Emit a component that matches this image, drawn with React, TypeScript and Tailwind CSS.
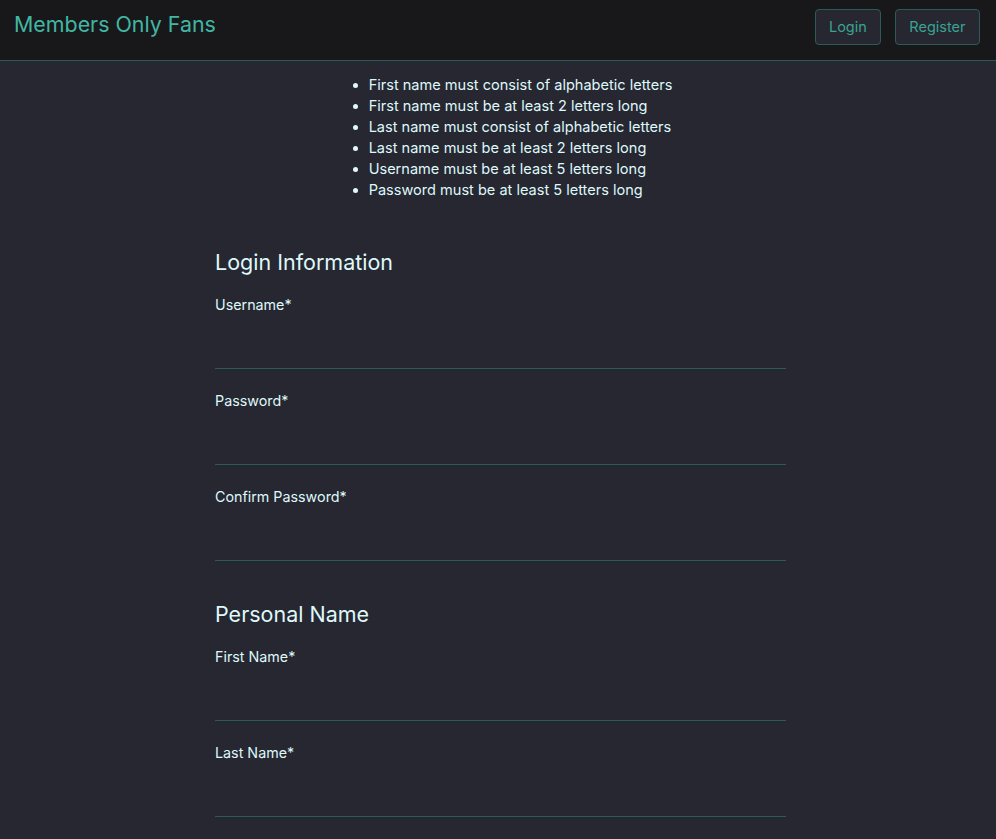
const rules = [
  "First name must consist of alphabetic letters",
  "First name must be at least 2 letters long",
  "Last name must consist of alphabetic letters",
  "Last name must be at least 2 letters long",
  "Username must be at least 5 letters long",
  "Password must be at least 5 letters long",
];

function Field({ label }: { label: string }) {
  return (
    <div className="mb-[21px] flex flex-col">
      <label className="h-[21px] text-[14.3px] leading-[21px] text-[#dff8fa]">{label}*</label>
      <input
        type="text"
        className="h-[54px] w-full border-b border-[#2c5a56] bg-transparent text-[#dff8fa] outline-none"
      />
    </div>
  );
}

export default function App() {
  return (
    <div className="min-h-[839px] bg-[#262731]" style={{ fontFamily: "Inter, 'Noto Sans', sans-serif" }}>
      <header className="flex h-[61px] items-start justify-between border-b border-[#2c5a56] bg-[#18181b] pl-[14px] pr-[16px]">
        <div className="pt-[9px] text-[21.4px] leading-[30px] text-[#42b6a2]">Members Only Fans</div>
        <div className="mt-[9px] flex gap-[14px]">
          <button className="h-[36px] rounded-[4px] border border-[#2c5a56] bg-[#262731] px-[13px] text-[14.5px] text-[#3aa391]">
            Login
          </button>
          <button className="h-[36px] rounded-[4px] border border-[#2c5a56] bg-[#262731] px-[13.5px] text-[14.5px] text-[#3aa391]">
            Register
          </button>
        </div>
      </header>
      <main className="flex flex-col items-center pl-[5px]">
        <ul className="mt-[14px] list-disc pl-[40px] text-[14.55px] leading-[21px] text-[#dff8fa]">
          {rules.map((r) => (
            <li key={r}>{r}</li>
          ))}
        </ul>
        <form className="mt-[45px] w-[571px]">
          <h2 className="mb-[16px] text-[21.5px] leading-[32px] text-[#dff8fa]">Login Information</h2>
          <Field label="Username" />
          <Field label="Password" />
          <Field label="Confirm Password" />
          <h2 className="mb-[16px] mt-[37px] text-[21.5px] leading-[32px] text-[#dff8fa]">Personal Name</h2>
          <Field label="First Name" />
          <Field label="Last Name" />
        </form>
      </main>
    </div>
  );
}
